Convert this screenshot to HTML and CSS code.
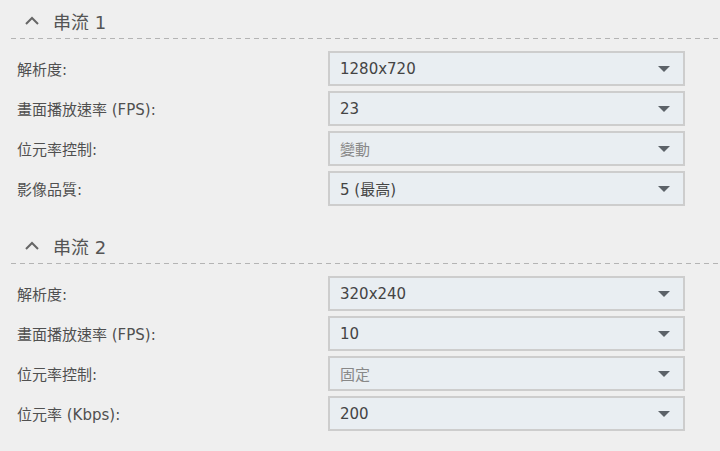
FILE: index.html
```html
<!DOCTYPE html>
<html lang="zh-Hant">
<head>
<meta charset="utf-8">
<link rel="stylesheet" href="styles.css">
</head>
<body>
<div class="page">
  <section class="stream">
    <div class="head">
      <svg class="chev" width="16" height="10" viewBox="0 0 16 10"><path d="M2 8 L8 2 L14 8" fill="none" stroke="#666" stroke-width="2"/></svg>
      <span class="title">串流 1</span>
    </div>
    <div class="rule"></div>
    <div class="rows">
      <div class="row"><span class="label">解析度:</span><div class="select"><span class="val">1280x720</span><span class="arrow"></span></div></div>
      <div class="row"><span class="label">畫面播放速率 (FPS):</span><div class="select"><span class="val">23</span><span class="arrow"></span></div></div>
      <div class="row"><span class="label">位元率控制:</span><div class="select"><span class="val dim">變動</span><span class="arrow"></span></div></div>
      <div class="row"><span class="label">影像品質:</span><div class="select"><span class="val">5 (最高)</span><span class="arrow"></span></div></div>
    </div>
  </section>
  <section class="stream">
    <div class="head">
      <svg class="chev" width="16" height="10" viewBox="0 0 16 10"><path d="M2 8 L8 2 L14 8" fill="none" stroke="#666" stroke-width="2"/></svg>
      <span class="title">串流 2</span>
    </div>
    <div class="rule"></div>
    <div class="rows">
      <div class="row"><span class="label">解析度:</span><div class="select"><span class="val">320x240</span><span class="arrow"></span></div></div>
      <div class="row"><span class="label">畫面播放速率 (FPS):</span><div class="select"><span class="val">10</span><span class="arrow"></span></div></div>
      <div class="row"><span class="label">位元率控制:</span><div class="select"><span class="val dim">固定</span><span class="arrow"></span></div></div>
      <div class="row"><span class="label">位元率 (Kbps):</span><div class="select"><span class="val">200</span><span class="arrow"></span></div></div>
    </div>
  </section>
</div>
</body>
</html>
```
FILE: styles.css
```css
html, body {
  margin: 0;
  padding: 0;
  background: #efefef;
}
body {
  font-family: "DejaVu Sans", "Noto Sans CJK TC", sans-serif;
  color: #555;
  width: 720px;
  height: 451px;
  overflow: hidden;
}
.page {
  padding-left: 11px;
  display: flex;
  flex-direction: column;
  gap: 19px;
}
.head {
  height: 38px;
  display: flex;
  align-items: center;
  padding-left: 13px;
  box-sizing: border-box;
  padding-top: 4px;
}
.chev {
  display: block;
  margin-right: 13px;
}
.title {
  font-size: 18px;
  color: #555;
}
.rule {
  height: 1px;
  background: repeating-linear-gradient(to right, #b4b4b4 0 5px, transparent 5px 9px);
}
.rows {
  display: flex;
  flex-direction: column;
  gap: 5px;
  padding-top: 12px;
}
.row {
  display: grid;
  grid-template-columns: 317px 357px;
  align-items: center;
}
.label {
  padding-left: 6px;
  font-size: 15px;
  color: #505050;
}
.select {
  height: 35px;
  box-sizing: border-box;
  border: 2px solid #cdcdcd;
  background: #e9eef2;
  display: flex;
  align-items: center;
  justify-content: space-between;
  padding: 0 13px 0 10px;
}
.val {
  font-size: 15px;
  color: #444;
}
.val.dim {
  color: #888;
}
.arrow {
  width: 0;
  height: 0;
  border-left: 6px solid transparent;
  border-right: 6px solid transparent;
  border-top: 6px solid #5c6268;
}
```
